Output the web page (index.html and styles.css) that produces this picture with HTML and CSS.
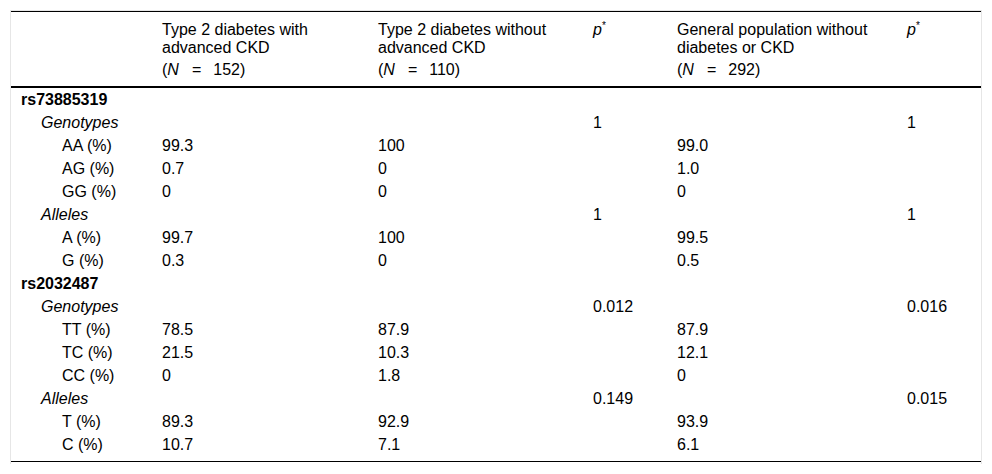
FILE: index.html
```html
<!DOCTYPE html>
<html>
<head>
<meta charset="utf-8">
<link rel="stylesheet" href="styles.css">
</head>
<body>
<div class="wrap">
<table class="tbl">
<colgroup>
<col class="c1"><col class="c2"><col class="c3"><col class="c4"><col class="c5"><col class="c6">
</colgroup>
<thead>
<tr>
<th></th>
<th>Type 2 diabetes with<br>advanced CKD<div class="n">(<i>N</i><span class="eq">=</span>152)</div></th>
<th>Type 2 diabetes without<br>advanced CKD<div class="n">(<i>N</i><span class="eq">=</span>110)</div></th>
<th><i>p</i><sup>*</sup></th>
<th>General population without<br>diabetes or CKD<div class="n">(<i>N</i><span class="eq">=</span>292)</div></th>
<th><i>p</i><sup>*</sup></th>
</tr>
</thead>
<tbody>
<tr><td class="snp">rs73885319</td><td></td><td></td><td></td><td></td><td></td></tr>
<tr><td class="grp">Genotypes</td><td></td><td></td><td>1</td><td></td><td>1</td></tr>
<tr><td class="lvl">AA (%)</td><td>99.3</td><td>100</td><td></td><td>99.0</td><td></td></tr>
<tr><td class="lvl">AG (%)</td><td>0.7</td><td>0</td><td></td><td>1.0</td><td></td></tr>
<tr><td class="lvl">GG (%)</td><td>0</td><td>0</td><td></td><td>0</td><td></td></tr>
<tr><td class="grp">Alleles</td><td></td><td></td><td>1</td><td></td><td>1</td></tr>
<tr><td class="lvl">A (%)</td><td>99.7</td><td>100</td><td></td><td>99.5</td><td></td></tr>
<tr><td class="lvl">G (%)</td><td>0.3</td><td>0</td><td></td><td>0.5</td><td></td></tr>
<tr><td class="snp">rs2032487</td><td></td><td></td><td></td><td></td><td></td></tr>
<tr><td class="grp">Genotypes</td><td></td><td></td><td>0.012</td><td></td><td>0.016</td></tr>
<tr><td class="lvl">TT (%)</td><td>78.5</td><td>87.9</td><td></td><td>87.9</td><td></td></tr>
<tr><td class="lvl">TC (%)</td><td>21.5</td><td>10.3</td><td></td><td>12.1</td><td></td></tr>
<tr><td class="lvl">CC (%)</td><td>0</td><td>1.8</td><td></td><td>0</td><td></td></tr>
<tr><td class="grp">Alleles</td><td></td><td></td><td>0.149</td><td></td><td>0.015</td></tr>
<tr><td class="lvl">T (%)</td><td>89.3</td><td>92.9</td><td></td><td>93.9</td><td></td></tr>
<tr class="last"><td class="lvl">C (%)</td><td>10.7</td><td>7.1</td><td></td><td>6.1</td><td></td></tr>
</tbody>
</table>
</div>
</body>
</html>
```

FILE: styles.css
```css
html, body {
  margin: 0;
  padding: 0;
  background: #fff;
}
body {
  padding: 10px 0 0 10px;
  font-family: "Liberation Sans", Arial, sans-serif;
  font-size: 16px;
  color: #000;
}
.wrap {
  width: 970px;
  border: 1px solid #e6e6e6;
  border-bottom: none;
  padding-bottom: 2px;
}
.tbl {
  width: 970px;
  border-collapse: collapse;
  table-layout: fixed;
  border-top: 1px solid #000;
  border-bottom: 1px solid #000;
}
.c1 { width: 141px; }
.c2 { width: 216px; }
.c3 { width: 215px; }
.c4 { width: 84px; }
.c5 { width: 230px; }
.c6 { width: 84px; }
.tbl th {
  font-weight: normal;
  text-align: left;
  vertical-align: top;
  line-height: 18px;
  padding: 9px 10px 7px 10px;
  border-bottom: 2px solid #000;
  white-space: nowrap;
}
.n {
  padding-top: 4px;
}
.tbl td {
  line-height: 19px;
  padding: 2px 10px;
  text-align: left;
  vertical-align: top;
  white-space: nowrap;
}
.tbl sup {
  font-size: 10px;
  line-height: 0;
  vertical-align: 6px;
}
.eq {
  padding: 0 12px 0 13px;
}
.snp {
  font-weight: bold;
}
.grp {
  font-style: italic;
}
.tbl td.grp {
  padding-left: 30px;
}
.tbl td.lvl {
  padding-left: 51px;
}
.last td {
  padding-bottom: 7px;
}
```
